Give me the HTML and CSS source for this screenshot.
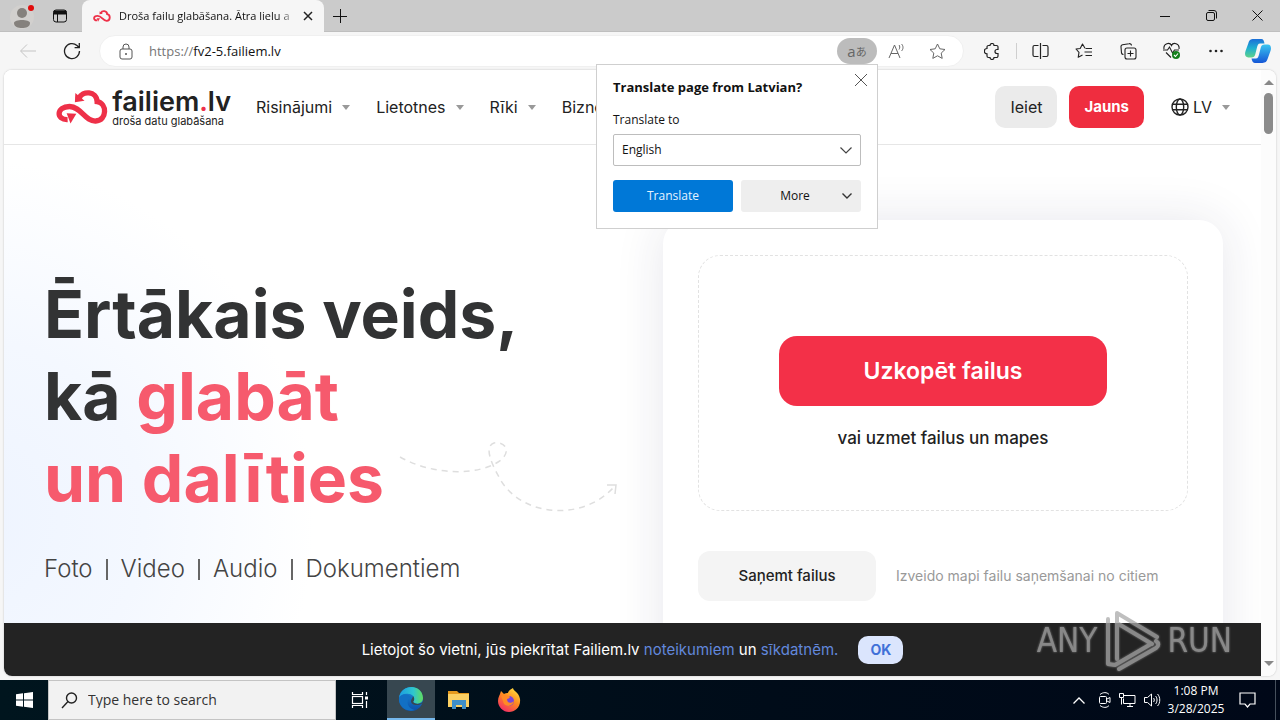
FILE: index.html
```html
<!DOCTYPE html>
<html lang="lv">
<head>
<meta charset="utf-8">
<title>Droša failu glabāšana</title>
<link rel="stylesheet" href="styles.css">
</head>
<body>
<svg width="0" height="0" class="defs" aria-hidden="true">
  <defs>
    <symbol id="cloud" viewBox="0 0 54 36">
      <path d="M24 9C27 1 42 1 42.500 12.500C53 14 53 32 41 32.500C30 33 26 17.500 14 17.500C0 17.500 0 31.500 12 31" fill="none" stroke="#ee3048" stroke-width="5.500"/>
      <path d="M20 3.500l-.5 9.500 10-1.500z" fill="#ee3048"/>
      <path d="M11 24.500l10 .5-6 10z" fill="#ee3048"/>
    </symbol>
    <linearGradient id="eg1" x1="0" y1="0" x2="1" y2="0"><stop offset="0" stop-color="#1b9de2"/><stop offset="0.600" stop-color="#2fc6cf"/><stop offset="1" stop-color="#62dd5c"/></linearGradient>
    <linearGradient id="eg2" x1="0" y1="0" x2="0" y2="1"><stop offset="0" stop-color="#1b8fdc"/><stop offset="1" stop-color="#0c4fa8"/></linearGradient>
    <linearGradient id="ff" x1="0.800" y1="0" x2="0.200" y2="1"><stop offset="0" stop-color="#ffe040"/><stop offset="0.450" stop-color="#ff8a1f"/><stop offset="1" stop-color="#f2266b"/></linearGradient>
    <linearGradient id="cp1" x1="0" y1="0" x2="0" y2="1"><stop offset="0" stop-color="#1b6fd8"/><stop offset="0.500" stop-color="#1fb0d0"/><stop offset="1" stop-color="#5fd28a"/></linearGradient>
    <linearGradient id="cp2" x1="0" y1="0" x2="0" y2="1"><stop offset="0" stop-color="#39c5f0"/><stop offset="1" stop-color="#1556d6"/></linearGradient>
  </defs>
</svg>

<div class="titlebar">
  <button class="profile" aria-label="Profile">
    <svg width="28" height="28" viewBox="0 0 28 28"><circle cx="14" cy="15" r="12" fill="#d2d0ce"/><circle cx="14" cy="11" r="5" fill="#85817d"/><path d="M6 21c0-4 16-4 16 0 0 4-4 5-8 5s-8-1-8-5z" fill="#85817d"/><circle cx="23" cy="6" r="3" fill="#e10c0c"/></svg>
  </button>
  <button class="workspaces" aria-label="Tab actions">
    <svg width="16" height="16" viewBox="0 0 16 16" fill="none" stroke="#111"><rect x="1.500" y="2" width="13" height="12" rx="2.500"/><path d="M2 3h12v3H2z" fill="#111"/><path d="M5.500 5v9"/></svg>
  </button>
  <div class="tab">
    <svg width="18" height="12"><use href="#cloud"/></svg>
    <span class="tab-title">Droša failu glabāšana. Ātra lielu a</span>
    <button class="tab-close" aria-label="Close tab"><svg width="10" height="10" viewBox="0 0 10 10" stroke="#222" stroke-width="1.500"><path d="M1 1l8 8M9 1L1 9"/></svg></button>
  </div>
  <button class="new-tab" aria-label="New tab"><svg width="14" height="14" viewBox="0 0 14 14" stroke="#111"><path d="M7.500 0v14M0 7.500h14"/></svg></button>
  <div class="window-controls">
    <button aria-label="Minimize"><svg width="10" height="10" viewBox="0 0 10 10" stroke="#111"><path d="M0 5.500h10"/></svg></button>
    <button aria-label="Restore"><svg width="11" height="11" viewBox="0 0 11 11" fill="none" stroke="#111"><rect x="0.500" y="2.500" width="8" height="8" rx="1.500"/><path d="M2.500 .5H8A2.500 2.500 0 0 1 10.500 3v5.500"/></svg></button>
    <button aria-label="Close"><svg width="11" height="11" viewBox="0 0 11 11" stroke="#111"><path d="M.5.5l10 10M10.500.5l-10 10"/></svg></button>
  </div>
</div>

<div class="toolbar">
  <button class="tool back" aria-label="Back"><svg width="18" height="16" viewBox="0 0 18 16" fill="none" stroke="#c4c4c4"><path d="M17 8H2M8 1.500L1.500 8 8 14.500"/></svg></button>
  <button class="tool reload" aria-label="Refresh"><svg width="18" height="18" viewBox="0 0 18 18" fill="none" stroke="#222" stroke-width="1.300"><path d="M16.500 9A7.500 7.500 0 1 1 14 3.500l2 2M16.300 1v4.700h-4.700"/></svg></button>
  <div class="address">
    <svg class="lock" width="14" height="17" viewBox="0 0 14 17" fill="none" stroke="#555"><rect x="1" y="6" width="12" height="10" rx="2"/><path d="M4 6V4a3 3 0 0 1 6 0v2"/><circle cx="7" cy="11" r="1" fill="#555" stroke="none"/></svg>
    <label class="scheme" for="url">https://</label>
    <input id="url" class="url" value="fv2-5.failiem.lv">
    <button class="tool translate-pill" aria-label="Translate">a<span>あ</span></button>
    <button class="tool" aria-label="Read aloud"><svg width="18" height="16" viewBox="0 0 18 16" fill="none" stroke="#666"><path d="M1 15L6.500 2 12 15M3 10.500h7M11 2c1 1 1 3 0 4.500M13.500 1c2 2 2 5 0 7"/></svg></button>
    <button class="tool" aria-label="Add to favorites"><svg width="17" height="17" viewBox="0 0 17 17" fill="none" stroke="#666"><path d="M8.500 1l2.300 4.800 5.200.7-3.800 3.600 1 5.300-4.700-2.600-4.700 2.600 1-5.300L1 6.500l5.200-.7z" stroke-linejoin="round"/></svg></button>
  </div>
  <div class="tools">
    <button class="tool" aria-label="Extensions"><svg width="17" height="17" viewBox="0 0 17 17" fill="none" stroke="#222" stroke-width="1.200"><path d="M3 5.500V4a1.500 1.500 0 0 1 1.500-1.500H6a2 2 0 0 1 4 0h2.500A1.500 1.500 0 0 1 14 4v2.500h-1a2 2 0 0 0 0 4h1V13a1.500 1.500 0 0 1-1.500 1.500H10a2 2 0 0 1-4 0H4.500A1.500 1.500 0 0 1 3 13v-2.200a2.200 2.200 0 0 1 0-5.300z"/></svg></button>
    <span class="divider"></span>
    <button class="tool" aria-label="Split screen"><svg width="17" height="16" viewBox="0 0 17 16" fill="none" stroke="#222"><path d="M6.500 2.500h-4a1.500 1.500 0 0 0-1.500 1.500v8a1.500 1.500 0 0 0 1.500 1.500h4M10.500 2.500h4A1.500 1.500 0 0 1 16 4v8a1.500 1.500 0 0 1-1.500 1.500h-4M8.500 0v16" stroke-width="1.200"/></svg></button>
    <button class="tool" aria-label="Favorites"><svg width="18" height="16" viewBox="0 0 18 16" fill="none" stroke="#222" stroke-width="1.100"><path d="M10 5.200L7.500 1 5.200 5.500 1 6l3 3.300-.8 5L7.500 12M10.500 5.500H17M9.500 9H17M10.500 12.500H17" stroke-linejoin="round"/></svg></button>
    <button class="tool" aria-label="Collections"><svg width="17" height="17" viewBox="0 0 17 17" fill="none" stroke="#222" stroke-width="1.100"><path d="M3.500 11.500A2 2 0 0 1 1.500 10L1 4a2 2 0 0 1 1.500-2.200L9 .7A2 2 0 0 1 11.500 2.500"/><rect x="5" y="5" width="11" height="11" rx="2"/><path d="M10.500 7.500v6M7.500 10.500h6"/></svg></button>
    <button class="tool" aria-label="Browser essentials"><svg width="18" height="18" viewBox="0 0 18 18" fill="none" stroke="#222" stroke-width="1.100"><path d="M1 7C0 1 7 0 8.500 3.500 10 0 17 1 16 7M3 10.500l5 5M0 8h4.500L6.500 5l3 6 2-3H16"/><circle cx="13" cy="13" r="4" fill="#14801c" stroke="none"/><path d="M11 13l1.500 1.500 2.500-3" stroke="#fff"/></svg></button>
    <button class="tool" aria-label="Settings"><svg width="14" height="4" viewBox="0 0 14 4" fill="#222"><circle cx="1.500" cy="2" r="1.300"/><circle cx="7" cy="2" r="1.300"/><circle cx="12.500" cy="2" r="1.300"/></svg></button>
    <button class="tool copilot" aria-label="Copilot"><svg width="26" height="26" viewBox="0 0 24 24"><path d="M8 1h7c2 0 2.500 2 3 4H14c-2 0-2.500 2-3 4l-1.500 6c-.6 2-1.500 3-3.500 3H3c-3 0-3.500-3-2.500-6L3 5c1-3 2-4 5-4z" fill="url(#cp1)"/><path d="M16 23H9c-2 0-2.500-2-3-4h4c2 0 2.500-2 3-4l1.500-6c.6-2 1.500-3 3.500-3h3c3 0 3.500 3 2.500 6L21 19c-1 3-2 4-5 4z" fill="url(#cp2)"/></svg></button>
  </div>
</div>

<div class="viewport">
  <div class="page">
    <header class="site-header">
      <a class="logo" href="#">
        <svg width="54" height="36"><use href="#cloud"/></svg>
        <span class="logo-text"><span class="logo-name">failiem<i>.</i>lv</span><span class="logo-sub">droša datu glabāšana</span></span>
      </a>
      <nav class="nav">
        <a href="#">Risinājumi</a><a href="#">Lietotnes</a><a href="#">Rīki</a><a href="#">Bizne</a>
      </nav>
      <div class="account">
        <button class="btn-login">Ieiet</button>
        <button class="btn-new">Jauns</button>
        <button class="lang">
          <svg width="18" height="18" viewBox="0 0 18 18" fill="none" stroke="#222" stroke-width="1.400"><circle cx="9" cy="9" r="8"/><ellipse cx="9" cy="9" rx="3.700" ry="8"/><path d="M1.500 6.300h15M1.500 11.700h15"/></svg>LV</button>
      </div>
    </header>

    <main class="hero">
      <section class="intro">
        <h1>Ērtākais veids,<br>kā <em>glabāt<br>un dalīties</em></h1>
        <ul class="kinds"><li>Foto</li><li>Video</li><li>Audio</li><li>Dokumentiem</li></ul>
      </section>
      <svg class="trail" width="224" height="76" viewBox="0 0 224 76" fill="none" stroke="#dedede" stroke-width="1.500"><path d="M4 18C38 37 84 37 105 21C116 11 108 2 98 4C88 7 95 24 103 38C122 76 184 85 218 48" stroke-dasharray="6 5"/><path d="M211 46h9l-1 9"/></svg>
      <section class="card">
        <div class="drop">
          <button class="btn-upload">Uzkopēt failus</button>
          <p>vai uzmet failus un mapes</p>
        </div>
        <div class="receive">
          <button class="btn-receive">Saņemt failus</button>
          <span>Izveido mapi failu saņemšanai no citiem</span>
        </div>
      </section>
    </main>

    <div class="cookies">
      <p>Lietojot šo vietni, jūs piekrītat Failiem.lv <a href="#">noteikumiem</a> un <a href="#">sīkdatnēm.</a></p>
      <button>OK</button>
    </div>
  </div>
  <div class="scrollbar"><span class="arrow-up"></span><span class="thumb"></span><span class="arrow-down"></span></div>
</div>

<div class="popup" role="dialog" aria-labelledby="popup-title">
  <h2 id="popup-title">Translate page from Latvian?</h2>
  <button class="popup-close" aria-label="Close"><svg width="12" height="12" viewBox="0 0 12 12" stroke="#555"><path d="M0 0l12 12M12 0L0 12"/></svg></button>
  <label for="lang">Translate to</label>
  <div class="select-wrap">
    <select id="lang"><option>English</option></select>
    <svg width="12" height="7" viewBox="0 0 12 7" fill="none" stroke="#444" stroke-width="1.200"><path d="M.5.5L6 6 11.500.5"/></svg>
  </div>
  <div class="popup-actions">
    <button class="go">Translate</button>
    <button class="more">More<svg width="10" height="6" viewBox="0 0 10 6" fill="none" stroke="#333" stroke-width="1.400"><path d="M.5.5L5 5 9.500.5"/></svg></button>
  </div>
</div>

<div class="watermark"><span>ANY</span>
  <svg width="58" height="64" viewBox="0 0 58 64" fill="none" stroke="currentColor" stroke-width="4" stroke-linejoin="round" stroke-linecap="round"><path d="M5 10v45l7 1 36-21M14 50V4l40 24M14 14l35 21M16 60l37-21c3-2 3-5 0-7"/></svg>
  <span>RUN</span></div>

<footer class="taskbar">
  <button class="task" aria-label="Start"><svg width="17" height="16" viewBox="0 0 17 16" fill="#fff"><path d="M0 2.300l7-1v6.200H0zM8 1.200L17 0v7.500H8zM0 8.500h7v6.200l-7-1zM8 8.500h9V16l-9-1.200z"/></svg></button>
  <label class="search"><svg width="17" height="17" viewBox="0 0 17 17" fill="none" stroke="#222" stroke-width="1.400"><circle cx="10.500" cy="6" r="5"/><path d="M7 9.500L1 16"/></svg><input type="text" placeholder="Type here to search" aria-label="Search"></label>
  <button class="task task-view" aria-label="Task view"><svg width="18" height="18" viewBox="0 0 18 18" fill="none" stroke="#fff" stroke-width="1.200"><path d="M1.500 1v2.500h10V1M1.500 17v-2.500h10V17M15.500 1v3M15.500 10v7"/><rect x="1.500" y="5.500" width="10" height="7"/><path d="M14 5.500h3v3h-3z" fill="#fff" stroke="none"/></svg></button>
  <button class="task active" aria-label="Edge"><svg width="26" height="26" viewBox="0 0 26 26"><circle cx="13" cy="13" r="12" fill="url(#eg2)"/><path d="M1 12C3-2 24-3 25 12c0 6-7 7-10 4 3-3 0-8-4-8C6 7 2 9 1 12z" fill="url(#eg1)"/><path d="M15 16c3 3 8 2 10 0v1c-4 3-12 3-12-2 0-2 2-3 2-5 2 2 1 5 0 6z" fill="#374750"/><path d="M1 12c3-5 10-5 12 0-5 1-5 10 4 12C8 27 0 20 1 12z" fill="#1270c4"/></svg></button>
  <button class="task" aria-label="File Explorer"><svg width="22" height="20" viewBox="0 0 22 20"><path d="M0 1h9l2 2h10v13H0z" fill="#e59a1e"/><path d="M0 4h21v13H0z" fill="#fbd063"/><path d="M4 10h14v9h-4v-4H8v4H4z" fill="#3f8fc8"/></svg></button>
  <button class="task firefox" aria-label="Firefox"><svg width="24" height="24" viewBox="0 0 24 24"><path d="M4 3l3 3c1-1 3-1 4-1 0-2 3-4 5-5 0 3 6 4 7 11 1 8-5 13-11 13S1 19 1 13c0-4 2-6 3-10z" fill="url(#ff)"/><circle cx="12" cy="13" r="5" fill="#7a45d8"/><path d="M4 8c3-2 6 0 8 0 2 1 0 3-2 3 0 4 4 5 7 2-1 6-10 7-11 0z" fill="#ff8a25"/></svg></button>
  <div class="tray">
    <button aria-label="Show hidden icons"><svg width="12" height="7" viewBox="0 0 12 7" fill="none" stroke="#fff" stroke-width="1.300"><path d="M.5 6.500L6 1l5.500 5.500"/></svg></button>
    <svg width="12" height="16" viewBox="0 0 12 16" fill="none" stroke="#fff"><rect x="0.500" y="4.500" width="7" height="7" rx="1"/><path d="M8 7l3-1.500v5L8 9M1 2.500C4 0 8 0 10 2.500M1 13.500C4 16 8 16 10 13.500"/></svg>
    <svg width="17" height="16" viewBox="0 0 17 16" fill="none" stroke="#fff"><path d="M5 3.500h11v8H4.500v-5M8 14.500h6M11 12v2M.5 1.500h4v4h-4zM2.500 5.500v7"/></svg>
    <svg width="17" height="14" viewBox="0 0 17 14" fill="none" stroke="#fff"><path d="M.5 4.500h3l4-3.500v12l-4-3.500h-3zM9.500 5c1 1 1 3 0 4M11.500 3c2 2 2 6 0 8M13.500 1c3 3 3 9 0 12"/></svg>
    <div class="clock"><span>1:08 PM</span><span>3/28/2025</span></div>
    <button aria-label="Notifications"><svg width="17" height="16" viewBox="0 0 17 16" fill="none" stroke="#fff" stroke-width="1.200"><path d="M1 1h15v11h-5l-2.500 3L6 12H1z"/></svg></button>
    <span class="peek"></span>
  </div>
</footer>
</body>
</html>
```
FILE: styles.css
```css
* { box-sizing: border-box; }
body {
  margin: 0;
  height: 100vh;
  display: flex;
  flex-direction: column;
  position: relative;
  overflow: hidden;
  background: #f6f6f6;
  color: #111;
  font: 12px/16px "Open Sans", "Noto Sans", sans-serif;
}
.defs { position: absolute; }
button { border: 0; padding: 0; background: none; font: inherit; color: inherit; display: flex; align-items: center; justify-content: center; }
h1, h2, p, ul { margin: 0; padding: 0; }
a { color: inherit; text-decoration: none; }

.titlebar { height: 32px; flex: none; display: flex; background: #cbcbcb; border-bottom: 1px solid #bfbfbf; }
.profile { width: 44px; }
.workspaces { width: 32px; }
.tab { display: flex; align-items: center; width: 242px; height: 32px; margin-left: 6px; padding: 0 11px; background: #f6f6f6; border-radius: 8px 8px 0 0; }
.tab-title { flex: 1; margin: 0 4px 0 8px; font-size: 11px; white-space: nowrap; overflow: hidden; mask-image: linear-gradient(to right, #000 88%, transparent); }
.new-tab { width: 32px; }
.window-controls { margin-left: auto; display: flex; }
.window-controls button { width: 46px; }

.toolbar { height: 38px; flex: none; display: flex; align-items: center; padding: 0 6px 0 12px; }
.tool { width: 32px; height: 26px; flex: none; }
.reload { margin-left: 12px; }
.address { flex: 1; display: flex; align-items: center; gap: 8px; height: 32px; margin: 0 12px 0 11px; padding: 0 10px 0 19px; background: #fff; border: 1px solid #f0f0f0; border-radius: 16px; }
.lock { margin-right: 8px; }
.scheme { font-size: 13px; color: #767676; }
.url { flex: 1; min-width: 0; margin-left: -8px; padding: 0; border: 0; outline: 0; background: none; font: inherit; font-size: 13px; color: #111; }
.translate-pill { width: 40px; border-radius: 13px; background: #bcbcbc; color: #666; font-size: 15px; margin-right: -4px; }
.translate-pill span { font: 11px/16px "Noto Sans CJK JP", sans-serif; }
.tools { display: flex; gap: 12px; align-items: center; }
.divider { width: 1px; height: 16px; margin: 0 -5px 0 -4px; background: #cfcfcf; }
.copilot { margin-left: -2px; }

.viewport { flex: 1; min-height: 0; display: flex; margin: 0 4px 4px; border-radius: 8px; overflow: hidden; background: #fff; box-shadow: 0 0 2px #bbb; }
.page { flex: 1; min-width: 0; position: relative; display: flex; flex-direction: column; overflow: hidden; font-family: Inter, sans-serif; background: radial-gradient(ellipse 340px 360px at -30px 450px, #eef4ff 0, #f4f8ff 50%, #fff 100%); }
.site-header { height: 75px; flex: none; display: flex; align-items: center; padding: 0 31px 0 52px; background: #fff; border-bottom: 1px solid #e6e6e6; font-size: 16px; line-height: 20px; color: #222; }
.logo { display: flex; align-items: center; gap: 4px; width: 175px; }
.logo-text { display: flex; flex-direction: column; }
.logo-name { font-size: 27px; line-height: 27px; font-weight: 600; }
.logo-name i { color: #ee3048; font-style: normal; }
.logo-sub { font-size: 11px; line-height: 12px; white-space: nowrap; }
.nav { display: flex; gap: 26px; margin-left: 25px; }
.nav a, .lang { display: flex; align-items: center; }
.nav a::after, .lang::after { content: ""; margin-left: 10px; border: 4px solid transparent; border-top: 5px solid #999; border-bottom: 0; }
.account { margin-left: auto; display: flex; gap: 12px; }
.btn-login, .btn-new { height: 42px; padding: 0 15px; border-radius: 10px; background: #ebebeb; }
.btn-new { background: #ef2d3f; color: #fff; font-size: 15px; font-weight: 700; }
.lang { margin-left: 15px; }
.lang svg { margin-right: 4px; }

.hero { flex: 1; min-height: 0; display: flex; justify-content: space-between; align-items: flex-start; position: relative; padding: 75px 38px 0 40px; }
.intro { padding-top: 53px; }
h1 { font-size: 66px; line-height: 82px; font-weight: 700; color: #323334; }
h1 em { font-style: normal; color: #f65a6d; }
.kinds { display: flex; align-items: center; margin-top: 34px; list-style: none; font-size: 24px; line-height: 32px; font-weight: 300; color: #444; }
.kinds li { display: flex; align-items: center; }
.kinds li + li::before { content: ""; width: 2px; height: 21px; margin: 0 13px; background: #666; }
.trail { position: absolute; left: 392px; top: 294px; }
.card { width: 560px; padding: 35px; border-radius: 24px; background: #fff; box-shadow: 0 0 50px rgba(40, 40, 80, 0.110); height: 560px; flex: none; }
.drop { display: flex; flex-direction: column; align-items: center; height: 256px; padding-top: 80px; border: 1px dashed #e2e2e2; border-radius: 22px; font-size: 17px; line-height: 24px; font-weight: 500; color: #222; }
.drop p { margin-top: 20px; }
.btn-upload { width: 328px; height: 70px; border-radius: 18px; background: #f33048; color: #fff; font-size: 23px; font-weight: 600; }
.receive { display: flex; align-items: center; gap: 20px; margin-top: 40px; font-size: 14px; color: #999; white-space: nowrap; }
.btn-receive { width: 178px; height: 50px; border-radius: 12px; background: #f4f4f4; color: #222; font-size: 15px; font-weight: 500; }
.cookies { position: absolute; left: 0; right: 0; bottom: 0; display: flex; align-items: center; justify-content: center; gap: 20px; height: 53px; background: #232323; color: #fff; font-size: 15px; line-height: 20px; }
.cookies a { color: #6288dc; }
.cookies button { width: 45px; height: 28px; border-radius: 10px; background: #dbe5fd; color: #4070d8; font-size: 14px; font-weight: 700; }
.scrollbar { width: 15px; display: flex; flex-direction: column; align-items: center; background: #fcfcfc; }
.arrow-up, .arrow-down { border: 5px solid transparent; border-top: 0; border-bottom: 5px solid #888; margin: 10px 0 8px; }
.thumb { width: 9px; height: 41px; border-radius: 5px; background: #8b8b8b; }
.arrow-down { border-bottom: 0; border-top: 5px solid #888; margin: auto 0 10px; }

.popup { position: absolute; right: 402px; top: 64px; width: 282px; padding: 13px 16px 16px; background: #fff; border: 1px solid #cfcfcf; display: flex; flex-direction: column; }
.popup h2 { font-size: 13px; line-height: 18px; font-weight: 700; margin-bottom: 16px; }
.popup-close { position: absolute; right: 10px; top: 9px; }
.select-wrap { position: relative; margin: 6px 0 14px; }
.select-wrap svg { position: absolute; right: 9px; top: 13px; }
.popup select { appearance: none; width: 100%; height: 32px; padding: 0 8px; border: 1px solid #bdbdbd; border-radius: 2px; background: #fff; font: inherit; color: #111; }
.popup-actions { display: grid; grid-template-columns: 1fr 1fr; gap: 8px; }
.popup-actions button { height: 32px; border-radius: 3px; }
.go { background: #0078d7; color: #e6f3ff; }
.more { position: relative; padding-right: 12px; background: #eee; }
.more svg { position: absolute; right: 9px; top: 13px; }

.watermark { position: absolute; right: 48px; bottom: 47px; display: flex; align-items: center; gap: 6px; color: #aaa; opacity: 0.750; font: 33px/40px "Liberation Sans Narrow", "DejaVu Sans Condensed", sans-serif; filter: drop-shadow(0 0 1px #fff8); }

.taskbar { height: 40px; flex: none; display: flex; background: linear-gradient(to right, #00151e, #000c19 60%, #000818); color: #fff; }
.task { width: 48px; }
.task-view { margin-right: 3px; }
.firefox { margin-left: 2px; }
.active { background: #374750; border-bottom: 2px solid #76b9ed; }
.search { display: flex; align-items: center; gap: 10px; width: 288px; padding: 0 12px; background: #f2f2f2; border: 1px solid #c4c4c4; }
.search input { flex: 1; min-width: 0; border: 0; padding: 0; outline: 0; background: none; font: inherit; font-size: 14px; }
.search input::placeholder { color: #333; opacity: 1; }
.tray { margin-left: auto; display: flex; align-items: center; gap: 8px; }
.tray button { height: 40px; }
.tray button:first-child { margin-right: 6px; }
.clock { display: flex; flex-direction: column; align-items: center; line-height: 18px; width: 54px; }
.clock + button { margin-left: 8px; }
.peek { width: 5px; height: 40px; margin-left: 11px; border-left: 1px solid #46505c; }
```
